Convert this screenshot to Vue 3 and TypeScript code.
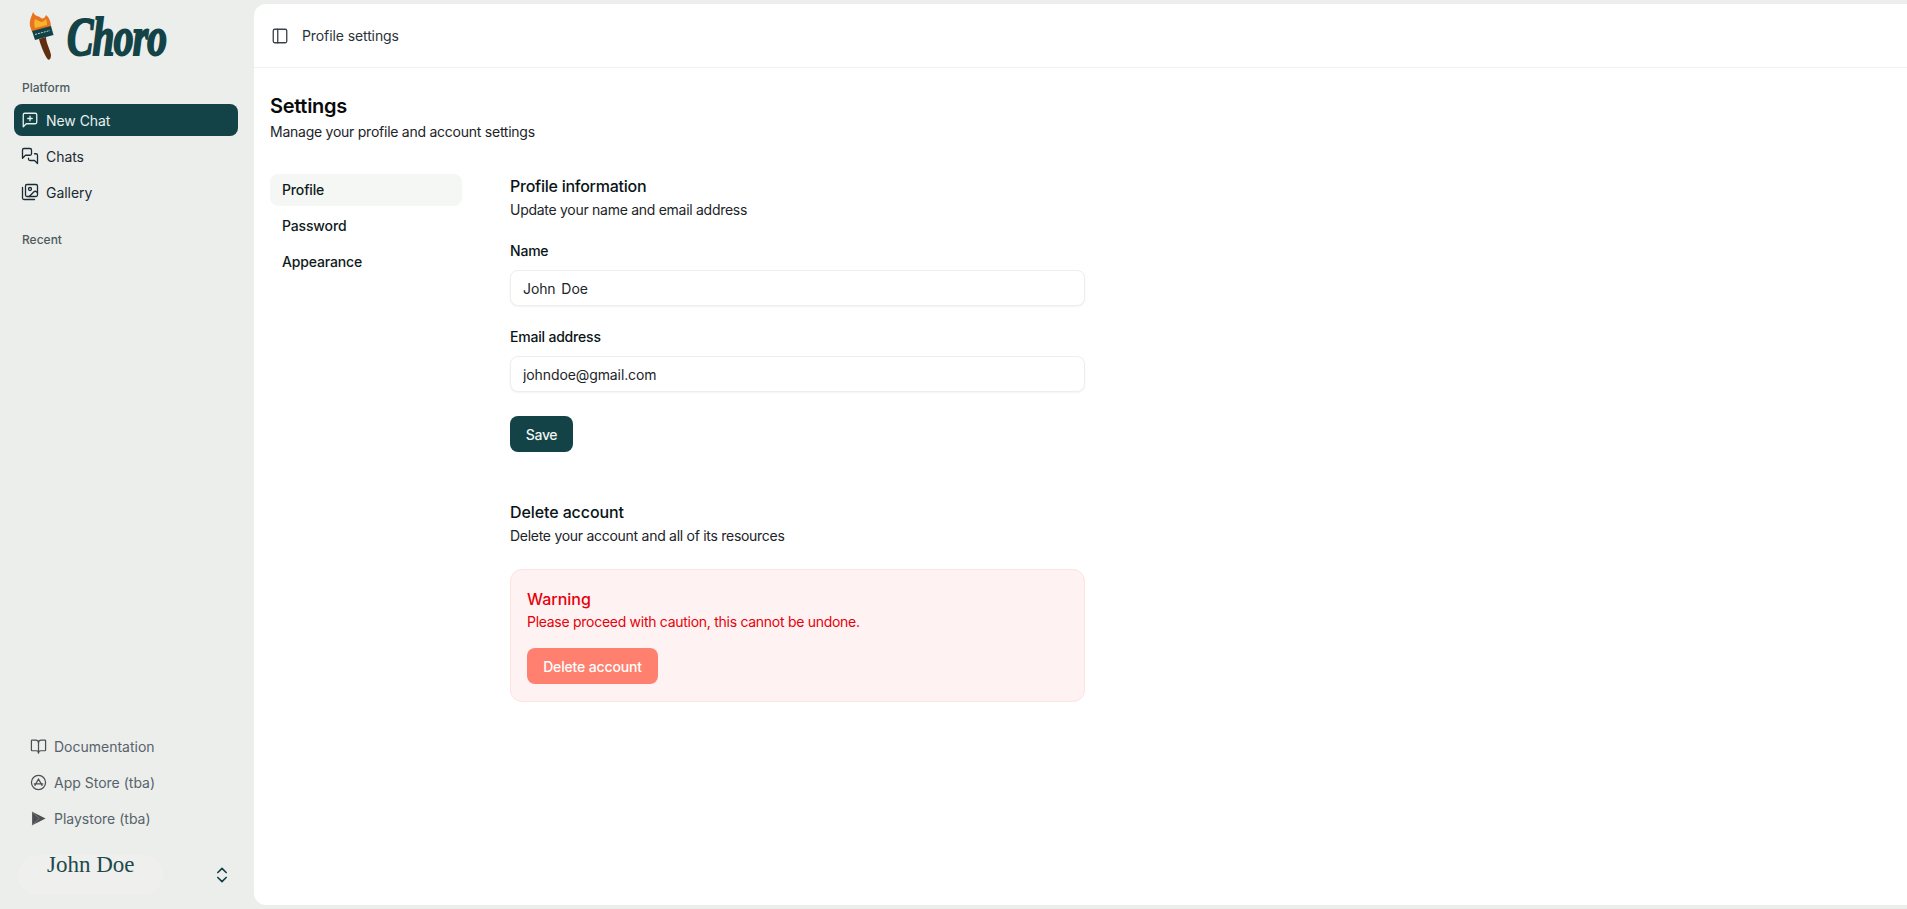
<script setup lang="ts">
const sections: string[] = ['Profile', 'Password', 'Appearance']
</script>

<template>
  <div class="app">
    <aside class="sidebar">
      <div class="logo">
        <svg class="brush" width="36" height="56" viewBox="0 0 36 56">
          <path d="M9 4 C8 8 5 12 6 18 L8 24 L27 19 C27 14 25 9 22 7 C21 10 19 11 17 10 C15 8 12 8 11 7 Z" fill="#e9731f" />
          <path d="M11 11 C13 12 15 13 17 14 C19 14 21 12 22 11 C23 13 23 15 23 17 L11 20 C10 17 10 14 11 11Z" fill="#f4b52c" />
          <path d="M8 23 L27 18 L29.500 27 L11 32Z" fill="#134346" />
          <path d="M11 26.500 L26 22.500" stroke="#b9d3d0" stroke-width="1" stroke-dasharray="2 1" />
          <path d="M15 31 L22 29 C22 35 26 41 27 47 C27 51 25 53 23.500 51 C20 46 17 38 15 31Z" fill="#5f2f10" />
        </svg>
        <span class="logo-text">Choro</span>
      </div>

      <div class="group-label">Platform</div>
      <nav class="nav">
        <a class="nav-item active">
          <svg class="icon" viewBox="0 0 24 24"><path d="M21 15a2 2 0 0 1-2 2H7l-4 4V5a2 2 0 0 1 2-2h14a2 2 0 0 1 2 2z" /><path d="M12 7v6M9 10h6" /></svg>
          New Chat
        </a>
        <a class="nav-item">
          <svg class="icon" viewBox="0 0 24 24"><path d="M14 9a2 2 0 0 1-2 2H6l-4 4V4a2 2 0 0 1 2-2h8a2 2 0 0 1 2 2z" /><path d="M18 9h2a2 2 0 0 1 2 2v11l-4-4h-6a2 2 0 0 1-2-2v-1" /></svg>
          Chats
        </a>
        <a class="nav-item">
          <svg class="icon" viewBox="0 0 24 24"><path d="M18 22H4a2 2 0 0 1-2-2V6" /><path d="m22 13-1.300-1.300a2.400 2.400 0 0 0-3.400 0L11 18" /><circle cx="12" cy="8" r="2" /><rect x="6" y="2" width="16" height="16" rx="2" /></svg>
          Gallery
        </a>
      </nav>

      <div class="group-label recent">Recent</div>

      <div class="foot">
        <a class="foot-item">
          <svg class="icon" viewBox="0 0 24 24"><path d="M12 7v14" /><path d="M3 18a1 1 0 0 1-1-1V4a1 1 0 0 1 1-1h5a4 4 0 0 1 4 4 4 4 0 0 1 4-4h5a1 1 0 0 1 1 1v13a1 1 0 0 1-1 1h-6a3 3 0 0 0-3 3 3 3 0 0 0-3-3z" /></svg>
          Documentation
        </a>
        <a class="foot-item">
          <svg class="icon" viewBox="0 0 24 24"><circle cx="12" cy="12" r="10" /><path d="M12 7l5 9M12 7l-5 9M6 14h12" /></svg>
          App Store (tba)
        </a>
        <a class="foot-item">
          <svg class="icon play" viewBox="0 0 24 24"><path class="tri" d="M3 2.500 L22 12 L3 21.500Z" /><path class="notch" d="M3 2.500 L13 12 L3 21.500" /></svg>
          Playstore (tba)
        </a>
      </div>

      <div class="user">
        <div class="user-name">John Doe</div>
        <svg class="chev" viewBox="0 0 24 24"><path d="m7 15 5 5 5-5" /><path d="m7 9 5-5 5 5" /></svg>
      </div>
    </aside>

    <main class="main">
      <header class="top">
        <svg class="icon panel" viewBox="0 0 24 24"><rect x="3" y="3" width="18" height="18" rx="2" /><path d="M9 3v18" /></svg>
        <span>Profile settings</span>
      </header>

      <div class="page">
        <h1>Settings</h1>
        <p class="lead">Manage your profile and account settings</p>

        <div class="cols">
          <nav class="side-nav">
            <a v-for="(s, i) in sections" :key="s" class="side-link" :class="{ current: i === 0 }">{{ s }}</a>
          </nav>

          <div class="content">
            <section>
              <h2>Profile information</h2>
              <p class="desc">Update your name and email address</p>
              <label class="field">
                <span>Name</span>
                <input type="text" value="John Doe" />
              </label>
              <label class="field">
                <span>Email address</span>
                <input type="text" value="johndoe@gmail.com" />
              </label>
              <button class="save" type="button">Save</button>
            </section>

            <section class="danger">
              <h2 class="tight">Delete account</h2>
              <p class="desc">Delete your account and all of its resources</p>
              <div class="warn">
                <div class="warn-title">Warning</div>
                <div class="warn-text">Please proceed with caution, this cannot be undone.</div>
                <button class="del" type="button">Delete account</button>
              </div>
            </section>
          </div>
        </div>
      </div>
    </main>
  </div>
</template>

<style>
html, body { margin: 0; background: #eceeec; overflow: hidden; }
</style>

<style scoped>
.app {
  display: flex;
  height: 909px;
  font-family: Inter, "Noto Sans", sans-serif;
  font-size: 14px;
  color: #0a0a0a;
  background: #eceeec;
}
.sidebar {
  width: 254px;
  flex: none;
  display: flex;
  flex-direction: column;
  box-sizing: border-box;
  padding: 0 16px 0 14px;
}
.logo { height: 65px; flex: none; display: flex; align-items: flex-start; padding: 8px 0 0 10px; box-sizing: border-box; }
.brush { flex: none; }
.logo-text {
  display: inline-block;
  font-family: "Liberation Serif", serif;
  font-style: italic;
  font-weight: 700;
  font-size: 54px;
  line-height: 58px;
  color: #134346;
  margin-left: 7px;
  -webkit-text-stroke: 2px #134346;
  letter-spacing: -1px;
  transform: scaleX(0.73);
  transform-origin: left center;
}
.group-label {
  font-size: 12px;
  font-weight: 500;
  color: #4e5a5c;
  padding-left: 8px;
  height: 16px;
  line-height: 16px;
  margin-top: 15px;
  margin-bottom: 8px;
}
.group-label.recent { margin-top: 24px; }
.nav { display: flex; flex-direction: column; gap: 4px; }
.nav-item {
  height: 32px;
  display: flex;
  align-items: center;
  gap: 7px;
  padding-left: 7px;
  border-radius: 8px;
  color: #1b2a33;
  letter-spacing: -0.05px;
}
.nav-item.active { background: #134346; color: #e6f0ee; }
.icon {
  width: 18px;
  height: 18px;
  flex: none;
  fill: none;
  stroke: currentColor;
  stroke-width: 1.750;
  stroke-linecap: round;
  stroke-linejoin: round;
}
.foot { margin-top: auto; display: flex; flex-direction: column; gap: 4px; }
.foot-item {
  height: 32px;
  display: flex;
  align-items: center;
  gap: 7px;
  padding-left: 16px;
  color: #57626b;
}
.foot-item .icon { width: 17px; height: 17px; color: #4b4f52; }
.icon.play { stroke: none; }
.tri { fill: #4b4f52; stroke: none; }
.notch { fill: none; stroke: #8b8e90; stroke-width: 1; }
.user {
  height: 40px;
  flex: none;
  margin-top: 21px;
  margin-bottom: 14px;
  display: flex;
  align-items: flex-start;
  justify-content: space-between;
  padding: 0 6px 0 4px;
}
.user-name {
  width: 145px;
  height: 40px;
  box-sizing: border-box;
  padding-left: 29px;
  border-radius: 20px;
  background: #efefed;
  font-family: "Liberation Serif", serif;
  font-size: 23px;
  line-height: 20px;
  color: #1d4a4c;
}
.chev {
  width: 20px;
  height: 20px;
  margin-top: 10px;
  fill: none;
  stroke: #134346;
  stroke-width: 2;
  stroke-linecap: round;
  stroke-linejoin: round;
}
.main {
  flex: 1;
  margin: 4px 0;
  background: #fff;
  border-radius: 12px 0 0 12px;
  min-width: 0;
}
.top {
  height: 64px;
  box-sizing: border-box;
  border-bottom: 1px solid #f0f1f1;
  display: flex;
  align-items: center;
  gap: 13px;
  padding: 0 0 0 17px;
  color: #2a3338;
  letter-spacing: -0.1px;
}
.panel { color: #3a4346; }
.page { padding: 24px 16px 0; }
h1 { margin: 0; font-size: 20px; font-weight: 600; line-height: 28px; letter-spacing: -0.3px; }
.lead { margin: 2px 0 0; line-height: 20px; color: #1c2428; letter-spacing: -0.25px; }
.cols { display: flex; margin-top: 32px; }
.side-nav { width: 192px; flex: none; display: flex; flex-direction: column; gap: 4px; }
.side-link {
  height: 32px;
  line-height: 32px;
  padding-left: 12px;
  border-radius: 8px;
  font-weight: 500;
  color: #101b20;
  letter-spacing: -0.15px;
}
.side-link.current { background: #f5f7f5; }
.content { width: 575px; margin-left: 48px; }
h2 { margin: 0; font-size: 16px; font-weight: 500; line-height: 24px; color: #0a1418; letter-spacing: -0.25px; }
h2.tight { letter-spacing: -0.1px; }
.desc { margin: 2px 0 0; line-height: 20px; color: #1c2428; letter-spacing: -0.28px; }
.field { display: block; margin-top: 21px; }
.field span { display: block; font-weight: 500; line-height: 20px; color: #0a1418; letter-spacing: -0.2px; }
input {
  display: block;
  box-sizing: border-box;
  width: 100%;
  height: 36px;
  margin-top: 9px;
  padding: 0 12px;
  border: 1px solid #eeeeee;
  border-radius: 8px;
  box-shadow: 0 1px 2px rgba(0, 0, 0, 0.05);
  background: #fff;
  font: inherit;
  color: #1c2428;
  letter-spacing: -0.1px;
  word-spacing: 2px;
  outline: none;
}
.save {
  display: block;
  height: 36px;
  width: 63px;
  margin-top: 24px;
  padding: 0;
  border: 0;
  border-radius: 8px;
  background: #134346;
  color: #eef4f3;
  font: inherit;
  font-weight: 500;
  letter-spacing: -0.3px;
}
.danger { margin-top: 48px; }
.warn {
  margin-top: 23px;
  box-sizing: border-box;
  height: 133px;
  padding: 17px 16px 0;
  border: 1px solid #ffe2e2;
  border-radius: 12px;
  background: #fef2f2;
}
.warn-title { font-size: 16px; font-weight: 500; line-height: 24px; color: #e7000b; }
.warn-text { margin-top: 1px; line-height: 20px; color: #e7000b; letter-spacing: -0.28px; }
.del {
  display: block;
  margin-top: 16px;
  height: 36px;
  width: 131px;
  padding: 0;
  border: 0;
  border-radius: 8px;
  background: #ff806e;
  color: #fff;
  font: inherit;
  font-weight: 500;
  letter-spacing: -0.15px;
}
</style>
